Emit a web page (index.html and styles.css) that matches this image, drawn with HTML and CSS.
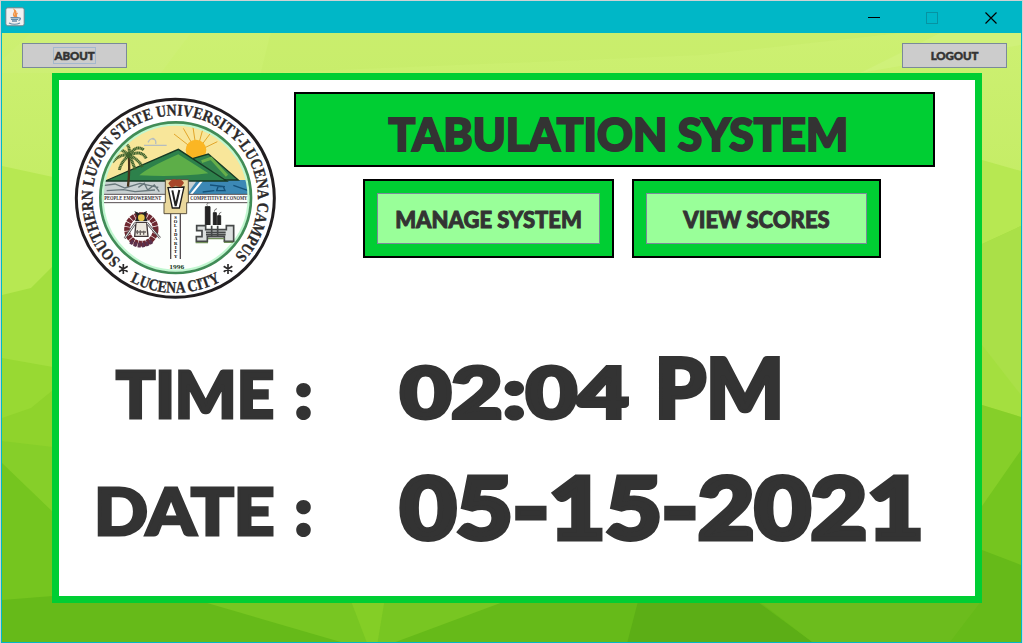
FILE: index.html
```html
<!DOCTYPE html>
<html lang="en">
<head>
<meta charset="utf-8">
<title>Tabulation System</title>
<link rel="stylesheet" href="styles.css">
</head>
<body>
<div class="window">
  <header class="titlebar">
    <svg class="java" width="20" height="20" viewBox="0 0 20 20">
      <rect x=".8" y=".8" width="18.4" height="18" rx="2" fill="#f0f0f0" stroke="#68848e"/>
      <path d="M10 10C6 7 11 6 9.500 3C13 5 9 7 10.500 10M12.500 6C10 8 12 8 11.500 10" fill="none" stroke="#f09447" stroke-width="1.300"/>
      <path d="M5.500 10.700H13.500M6 12.300H13M7 14H12M4 16C7 17.500 12 17.500 15 16M13.500 11C16.500 10.500 15.500 13 13.500 13.500" fill="none" stroke="#668ca8" stroke-width="1.300"/>
    </svg>
    <svg class="controls" width="132" height="20" viewBox="0 0 132 20" shape-rendering="crispEdges">
      <path d="M0 10.500H12" stroke="#000"/>
      <rect x="58.500" y="5.500" width="11" height="11" fill="none" stroke="#0693a2"/>
      <path d="M117.500 5.500l11 11M128.500 5.500l-11 11" stroke="#000" stroke-width="1.200" shape-rendering="auto"/>
    </svg>
  </header>
  <main class="stage">
    <svg class="facets" viewBox="1 33 1020 609" preserveAspectRatio="none">
      <defs>
        <linearGradient id="base" x1="0" y1="0" x2="0" y2="1">
          <stop offset="0" stop-color="#cdf072"/><stop offset="1" stop-color="#c5ed66"/>
        </linearGradient>
      </defs>
      <rect x="1" y="33" width="1020" height="145" fill="url(#base)"/>
      <path d="M30 33H190L160 73H1V60Z" fill="#d2f17f" opacity=".35"/>
      <path d="M270 33H900L700 55L260 73Z" fill="#c6ec68" opacity=".5"/>
      <path d="M1021 33V45L860 73L940 33Z" fill="#d2f180" opacity=".6"/>
      <path d="M1 166L52 177L500 190L982 160L1021 171V320H1Z" fill="#b7e852"/>
      <path d="M1 295L30 288L52 266L500 300L982 244L1021 226V420H1Z" fill="#a4df3f"/>
      <path d="M982 244L1021 226V395L982 345Z" fill="#aae048"/>
      <path d="M1 358L52 367L500 400L982 405L1021 417V600H1Z" fill="#98d933"/>
      <path d="M1 418L30 408L52 390V450L1 441Z" fill="#8fd32c"/>
      <path d="M1 441L52 447L982 405L1021 417V600H1Z" fill="#86cf29"/>
      <path d="M1 463L52 512L500 570L982 506L1021 450V642H1Z" fill="#75c51f"/>
      <path d="M1 600L52 596L600 600L982 550L1021 565V642H1Z" fill="#66ba19"/>
      <path d="M196 600L340 642H395L508 600Z" fill="#78c622"/>
      <path d="M350 600H384L377 642H366Z" fill="#84ce26"/>
      <path d="M638 600H755L812 642H627Z" fill="#5cae16"/>
      <path d="M757 600H982L950 642H812Z" fill="#6cbc1d"/>
    </svg>
    <nav class="topnav">
      <button class="navbtn"><span class="focus">ABOUT</span></button>
      <button class="navbtn"><span>LOGOUT</span></button>
    </nav>
    <section class="panel">
      <div class="masthead">
        <svg class="seal" width="212" height="215" viewBox="0 0 636 645">
          <defs>
            <path id="ring" d="M152 511A248 248 0 1 1 487 504"/>
            <path id="foot" d="M180 574A284 284 0 0 0 452 574"/>
            <clipPath id="disc"><circle cx="317" cy="323" r="224"/></clipPath>
          </defs>
          <circle cx="316" cy="325" r="297" fill="#fff" stroke="#211e20" stroke-width="9"/>
          <circle cx="317" cy="323" r="224" fill="#fdfffd"/>
          <g clip-path="url(#disc)">
            <rect x="80" y="90" width="480" height="180" fill="#f8e69a"/>
            <path d="M380 185L312 132M380 185L340 115M380 185L368 105M380 185L400 112M380 185L425 125M380 185L442 155" stroke="#e1a52b" stroke-width="3"/>
            <circle cx="378" cy="180" r="31" fill="#fbb623"/>
            <rect x="80" y="270" width="480" height="42" fill="#c9d1d2"/>
            <path d="M352 312L382 270H550V312Z" fill="#3c88b5"/>
            <path d="M360 312l32-40h8l-32 40Z" fill="#fff"/>
            <path d="M90 288l45-6 30 12 45-14 55 12M110 302l50 -3 35 6 60-5M205 292l18-12 10 20 20-15 15 20" fill="none" stroke="#68777b" stroke-width="4"/>
            <path d="M420 285l45 5M440 302h25l-5-12h-16zM490 286l45 16M398 306l35-4" fill="none" stroke="#15527a" stroke-width="4"/>
            <path d="M370 205L415 192L505 270H400Z" fill="#33834d" stroke="#173a24" stroke-width="4"/>
            <path d="M106 273L325 178L470 273Z" fill="#2d814b" stroke="#173a24" stroke-width="4"/>
            <path d="M208 256Q230 235 325 193Q360 215 415 250Q320 262 208 256Z" fill="#5dae48"/>
            <path d="M395 215l28-10 48 52" fill="none" stroke="#67ae49" stroke-width="9"/>
            <path d="M174 290Q180 235 176 192" fill="none" stroke="#46331c" stroke-width="7"/>
            <path d="M177 196Q145 165 130 193M177 196Q150 190 127 217M177 196Q154 215 148 240M177 196Q182 160 160 162M177 196Q200 162 221 180M177 196Q215 178 229 206M177 196Q205 207 217 231M177 196Q190 220 195 239" fill="none" stroke="#3d612c" stroke-width="9" stroke-dasharray="4 1"/>
            <path d="M234 157q8-16 20-8M248 144q12 5 9 18M222 166h68" fill="none" stroke="#b5bdc0" stroke-width="4"/>
            <path d="M90 313H545V338H90Z" fill="#fff" stroke="#554e50" stroke-width="3"/>
          </g>
          <circle cx="317" cy="323" r="219" fill="none" stroke="#c1f7d0" stroke-width="7"/>
          <circle cx="317" cy="323" r="226" fill="none" stroke="#418c57" stroke-width="8"/>
          <text class="motto" x="103" y="331" textLength="171" lengthAdjust="spacingAndGlyphs">PEOPLE EMPOWERMENT</text>
          <text class="motto" x="361" y="331" textLength="171" lengthAdjust="spacingAndGlyphs">COMPETITIVE ECONOMY</text>
          <path d="M302 370V507M331 370V507" stroke="#554e50" stroke-width="4"/>
          <path d="M286 269H355V338H350V371H282V338H286Z" fill="#ead89c" stroke="#59513f" stroke-width="3"/>
          <path d="M294 293L342 291L328 354H307Z" fill="#fff" stroke="#1c1a19" stroke-width="4"/>
          <path d="M307 301l10 47 11-48" fill="none" stroke="#222" stroke-width="6"/>
          <path d="M295 280q12-17 25-10 15-6 22 9l-10 13-15-5-13 6Z" fill="#a7472a"/>
          <text class="pillar" x="317" y="374" textLength="132">SOLIDARITY</text>
          <circle cx="214" cy="418" r="43" fill="#fff" stroke="#6e2830" stroke-width="17" stroke-dasharray="11 2"/>
          <path d="M198 397h32l4 42h-40Z" fill="#ede8df" stroke="#42383a" stroke-width="4"/>
          <path d="M196 399L164 445M231 399L270 444" stroke="#565154" stroke-width="7"/>
          <path d="M196 399L164 445M231 399L270 444" stroke="#eee" stroke-width="3"/>
          <path d="M193 363l18 8 20-8-4 17 6 13h-38l7-13Z" fill="#242424"/>
          <circle cx="214" cy="383" r="10" fill="#e9c84c"/>
          <path d="M197 426h31M202 433v-13M211 435v-14M221 434v-12" stroke="#6b6462" stroke-width="4"/>
          <path d="M182 454q30 24 65-2" fill="none" stroke="#5a314d" stroke-width="14" stroke-dasharray="9 3"/>
          <path d="M406 405v-55h14v55M430 405v-37h9v37M443 405v-28h9v28" fill="#252525" stroke="#252525" stroke-width="3"/>
          <path d="M412 347q-5-8 8-9M433 365q0-8 8-9M447 375q0-8 7-8" fill="none" stroke="#777" stroke-width="3"/>
          <path d="M380 407h27v12h62v-12h22v47h-28v-14h-51v14h-33V440h17V422H380ZM408 427h59M408 434h59M425 407v30M443 407v30" fill="#dce0df" stroke="#454848" stroke-width="5"/>
          <path d="M377 458h37M462 457h27M414 446h49" stroke="#708e58" stroke-width="4"/>
          <text class="year" x="320" y="538" textLength="45" lengthAdjust="spacingAndGlyphs">1996</text>
          <text class="ringtext"><textPath href="#ring" textLength="1180" lengthAdjust="spacingAndGlyphs">SOUTHERN LUZON STATE UNIVERSITY-LUCENA CAMPUS</textPath></text>
          <text class="ringtext"><textPath href="#foot" textLength="284" lengthAdjust="spacingAndGlyphs">LUCENA CITY</textPath></text>
          <path d="M160 522v30M147 529l26 16M173 529l-26 16M474 522v30M461 529l26 16M487 529l-26 16" stroke="#2b292a" stroke-width="5"/>
        </svg>
        <div class="heading">
          <h1 class="title"><span>TABULATION SYSTEM</span></h1>
          <div class="actions">
            <div class="frame manage"><button><span>MANAGE SYSTEM</span></button></div>
            <div class="frame view"><button><span>VIEW SCORES</span></button></div>
          </div>
        </div>
      </div>
      <div class="readout time">
        <div class="label"><span class="word">TIME</span><span class="colon">:</span></div>
        <div class="value"><span class="clock">02:04</span><span class="meridiem">PM</span></div>
      </div>
      <div class="readout date">
        <div class="label"><span class="word">DATE</span><span class="colon">:</span></div>
        <div class="value"><span class="day">05-15-2021</span></div>
      </div>
    </section>
  </main>
</div>
</body>
</html>
```
FILE: styles.css
```css
* { box-sizing: border-box; }
body {
  margin: 0;
  width: 1023px;
  height: 643px;
  overflow: hidden;
  background: #cfd2d4;
  color: #333;
  font-family: Lato, "Liberation Sans", sans-serif;
  font-weight: 900;
}
button { font: inherit; color: inherit; padding: 0; border: 1px solid #7a8a99; display: flex; align-items: center; justify-content: center; }
.window {
  width: 1021px;
  height: 642px;
  margin: 1px 1px 0;
  border: solid #00b7c7;
  border-width: 0 1px 1px;
}
.titlebar {
  height: 32px;
  background: #00b7c7;
  display: flex;
  justify-content: space-between;
  align-items: flex-start;
  padding: 6px 21px 0 3px;
}
.stage { position: relative; height: 609px; padding: 10px 14px 0 20px; }
.facets { position: absolute; inset: 0; width: 100%; height: 100%; }
.topnav { position: relative; display: flex; justify-content: space-between; }
.navbtn { width: 105px; height: 25px; background: #ccc; font-size: 11.5px; letter-spacing: -.1px; }
.navbtn span { -webkit-text-stroke: .5px #333; }
.focus { border: 1px solid #a3b8cc; height: 17px; line-height: 16px; }
.panel {
  position: relative;
  width: 930px;
  height: 530px;
  margin: 5px 0 0 30px;
  border: 7px solid #00ce33;
  background: #fff;
  padding: 10px 0 0 11px;
}
.masthead { display: flex; height: 215px; }
.ringtext { font: 700 49px "Liberation Serif", serif; fill: #2b292a; stroke: #2b292a; stroke-width: 1px; }
.motto { font: 700 17px "Liberation Serif", serif; fill: #383335; }
.pillar { font: 700 14px "Liberation Serif", serif; writing-mode: vertical-rl; text-orientation: upright; }
.year { font: 700 18px "Liberation Serif", serif; text-anchor: middle; fill: #173c24; }
.heading { margin: 2px 0 0 12px; width: 641px; }
.title {
  margin: 0;
  height: 75px;
  border: 2px solid #000;
  background: #00ce33;
  font-size: 45px;
  line-height: 81px;
  font-weight: 900;
  text-align: center;
  padding-left: 7px;
}
.title span { display: inline-block; white-space: nowrap; transform: scaleX(.985); -webkit-text-stroke: 2px #333; }
.actions { display: flex; gap: 18px; margin: 12px 0 0 69px; }
.frame { height: 79px; padding: 12px; border: 2px solid #000; background: #00ce33; display: flex; }
.frame button { flex: 1; background: #9f9; font-size: 22px; white-space: nowrap; height: 51px; }
.frame span { -webkit-text-stroke: .9px #333; margin-top: 1px; }
.manage { width: 251px; }
.view { width: 249px; }
.readout { display: grid; grid-template-columns: 242px 1fr; column-gap: 88px; height: 116px; align-items: baseline; line-height: 100px; white-space: nowrap; }
.time { margin-top: 31px; }
.label { display: flex; justify-content: flex-end; gap: 21px; font-size: 65px; -webkit-text-stroke: 3px #333; }
.word { display: inline-block; }
.date .word { transform: scaleX(1.09); transform-origin: right; }
.colon { -webkit-text-stroke: 4px #333; }
.value { display: flex; align-items: baseline; -webkit-text-stroke: 4px #333; }
.clock { font-size: 70px; transform: scaleX(1.265); transform-origin: left; }
.meridiem { font-size: 82px; margin-left: 74px; }
.day { font-size: 86px; transform: translateY(4px) scaleX(1.13); transform-origin: left; -webkit-text-stroke: 5px #333; }
```
